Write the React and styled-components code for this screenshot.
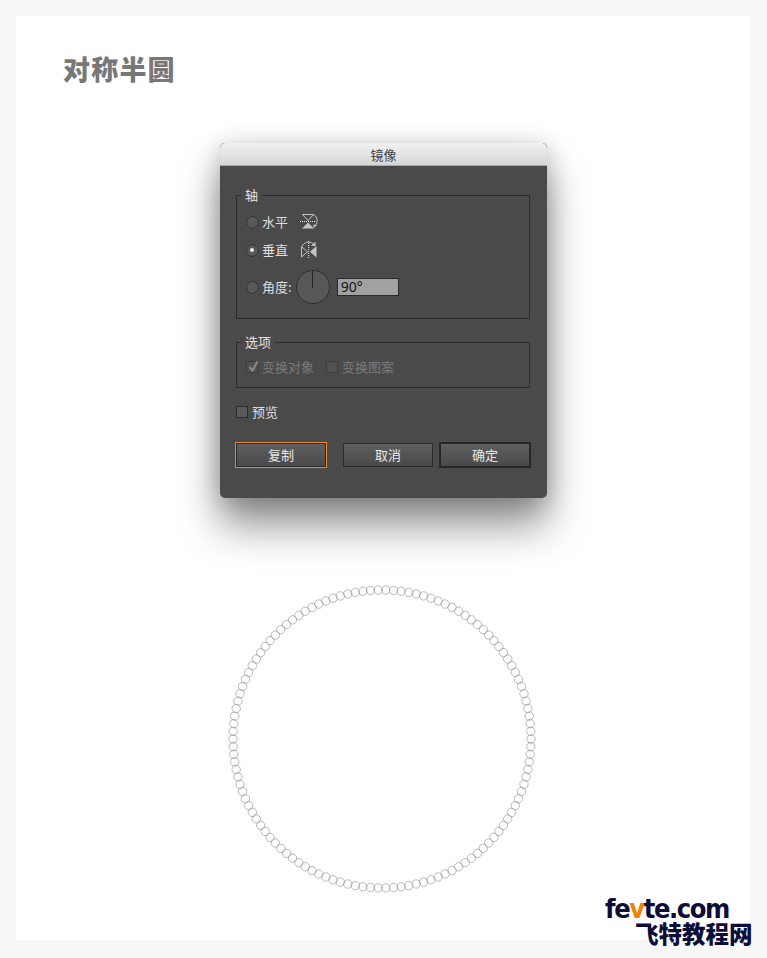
import React from 'react';
import styled, { createGlobalStyle } from 'styled-components';

const Global = createGlobalStyle`
  html, body { margin: 0; padding: 0; background: #f7f7f7; }
  body { font-family: "Noto Sans CJK SC", "Liberation Sans", sans-serif; overflow: hidden; }
`;
const Page = styled.div`
  width: 767px; height: 958px; padding: 16px 17px 18px 16px; box-sizing: border-box; position: relative; overflow: hidden;
`;
const Card = styled.main`
  width: 734px; height: 924px; background: #fff; display: flex; flex-direction: column; align-items: flex-start;
`;
const Title = styled.h1`
  margin: 37px 0 0 47px; font-size: 27px; line-height: 32px; font-weight: 900; letter-spacing: 1.2px; color: #777;
`;
const Dialog = styled.section`
  width: 327px; margin: 58px 0 0 204px; border-radius: 5px; background: #4a4a4a;
  box-shadow: 0 28px 42px rgba(0,0,0,.42), 0 4px 24px rgba(0,0,0,.22); overflow: hidden;
`;
const TitleBar = styled.header`
  height: 22px; background: linear-gradient(#f1f1f1, #d6d6d6); border-bottom: 1px solid #a9a9a9;
  text-align: center; font-size: 13px; line-height: 23px; color: #444; border-radius: 5px 5px 0 0;
`;
const Body = styled.div`
  padding: 20px 17px 30px 16px;
`;
const Group = styled.fieldset`
  margin: ${p => p.$top || 0}px 0 0; padding: ${p => p.$pad}; min-width: 0; border: 1px solid #2c2c2c;
  display: flex; flex-direction: column;
`;
const Legend = styled.legend`
  margin-left: 4px; padding: 0 4px; font-size: 13px; line-height: 18px; color: #e2e2e2;
`;
const Row = styled.div`
  display: flex; align-items: center; height: ${p => p.$h || 20}px; margin-top: ${p => p.$top || 0}px; font-size: 13px; color: #dedede;
`;
const Radio = styled.span`
  width: 13px; height: 13px; box-sizing: border-box; border-radius: 50%; border: 1.5px solid #2b2b2b; margin: 0 3.5px 0 -.5px;
  background: #585858; box-shadow: 0 0 0 .5px #5c5c5c; display: flex; align-items: center; justify-content: center; flex: none;
  &::after { content: ""; width: 4px; height: 4px; border-radius: 50%; background: ${p => p.$on ? '#eee' : 'transparent'}; }
`;
const Label = styled.span`
  line-height: 18px; white-space: nowrap; color: ${p => p.$dim ? '#7a7a7a' : 'inherit'};
`;
const FlipIcon = styled.svg`
  width: 18px; height: 18px; margin-left: 12px; flex: none; color: #c4c4c4;
`;
const Dial = styled.div`
  width: 34px; height: 34px; box-sizing: border-box; border-radius: 50%; border: 1px solid #2e2e2e; background: #585858;
  margin-left: 4px; flex: none; display: flex; justify-content: center;
  &::after { content: ""; width: 1.5px; height: 17px; background: #262626; }
`;
const Field = styled.div`
  width: 62px; height: 18px; box-sizing: border-box; margin-left: 7px; padding-left: 3px; background: #a1a1a1; border: 1px solid #2a2a2a;
  font: 14px/16px "Noto Sans", "Liberation Sans", sans-serif; color: #111;
`;
const Box = styled.span`
  width: 12px; height: 12px; box-sizing: border-box; border: 1px solid ${p => p.$dim ? '#3c3c3c' : '#2b2b2b'}; background: ${p => p.$dim ? '#525252' : '#5a5a5a'};
  margin-right: 4px; flex: none; position: relative; display: block;
  & > svg { position: absolute; left: -1px; top: -3px; }
`;
const GroupRow = styled(Row)`
  padding-left: 9px;
`;
const Gap = styled.span`
  width: ${p => p.$w}px; flex: none;
`;
const Actions = styled.div`
  display: flex; align-items: center; margin: 20px -2px 0 -1px;
`;
const Button = styled.button`
  width: ${p => p.$primary || p.$focus ? 92 : 90}px; height: ${p => p.$primary || p.$focus ? 26 : 24}px; box-sizing: border-box; padding: 0;
  margin-left: ${p => p.$left || 0}px;
  border: ${p => p.$primary ? '2px solid #262626' : p.$focus ? '1px solid #ec8a2b' : '1px solid #2a2a2a'};
  box-shadow: ${p => p.$focus ? 'inset 0 0 0 1px #2a2a2a' : 'none'};
  background: linear-gradient(#606060, #494949); font: 13px/18px "Noto Sans CJK SC", sans-serif; color: #e8e8e8;
`;
const Ring = styled.svg`
  display: block; margin: 81px 0 0 206px; flex: none;
`;
const Logo = styled.div`
  position: absolute; left: 605px; top: 897px; color: #0d0d38; width: 150px;
`;
const LogoTop = styled.div`
  font: 700 27px/24px "DejaVu Sans", sans-serif; font-stretch: condensed; letter-spacing: -1.4px; white-space: nowrap;
  & > b { color: #f08300; font-weight: 700; }
`;
const LogoBottom = styled.div`
  margin: 0 0 0 30px; font: 900 23.5px/24px "Noto Sans CJK SC", sans-serif; white-space: nowrap;
`;

const COUNT = 122;
const beads = Array.from({ length: COUNT }, (_, i) => {
  const a = (i / COUNT) * Math.PI * 2;
  return [160 + 149 * Math.cos(a), 160 + 149 * Math.sin(a)];
});

export default function App() {
  return (
    <Page>
      <Global />
      <Card>
        <Title>对称半圆</Title>
        <Dialog>
          <TitleBar>镜像</TitleBar>
          <Body>
            <Group $pad="8px 0 14px">
              <Legend>轴</Legend>
              <GroupRow>
                <Radio /><Label>水平</Label>
                <FlipIcon viewBox="0 0 18 18" fill="none">
                  <path d="M2.500 1.500h11L8 7.500z" stroke="currentColor" />
                  <path d="M2 15.500h12L8 9.500z" fill="currentColor" />
                  <path d="M0 8.500h15" stroke="#eee" strokeDasharray="1 1" />
                  <path d="M14 2c3.500 1.500 4 7.500 1.500 10.500" stroke="currentColor" />
                  <path d="M17 12l-3.500 3.200v-3.700z" fill="currentColor" />
                </FlipIcon>
              </GroupRow>
              <GroupRow $top={8}>
                <Radio $on /><Label>垂直</Label>
                <FlipIcon viewBox="0 0 18 18" fill="none">
                  <path d="M1.500 5.500v10.500l6-5.200z" stroke="currentColor" />
                  <path d="M16.500 5v11.500l-6.500-5.700z" fill="currentColor" />
                  <path d="M8.700 0v17" stroke="#eee" strokeDasharray="1 1" />
                  <path d="M2 5.500C3.500 1.500 9-.5 13 2.500" stroke="currentColor" />
                  <path d="M15.500 .5v4.500h-4.500z" fill="currentColor" />
                </FlipIcon>
              </GroupRow>
              <GroupRow $h={34} $top={10}>
                <Radio /><Label>角度:</Label>
                <Dial />
                <Field>90°</Field>
              </GroupRow>
            </Group>
            <Group $top={14} $pad="6px 0 10px">
              <Legend>选项</Legend>
              <GroupRow>
                <Box $dim>
                  <svg width="15" height="15" viewBox="0 0 15 15" fill="none">
                    <path d="M3.500 8l3 3.500 5-9" stroke="#8a8a8a" strokeWidth="2" />
                  </svg>
                </Box>
                <Label $dim>变换对象</Label>
                <Gap $w={12} />
                <Box $dim />
                <Label $dim>变换图案</Label>
              </GroupRow>
            </Group>
            <Row $top={14}>
              <Box /><Label>预览</Label>
            </Row>
            <Actions>
              <Button $focus>复制</Button>
              <Button $left={16}>取消</Button>
              <Button $left={6} $primary>确定</Button>
            </Actions>
          </Body>
        </Dialog>
        <Ring width="320" height="320" viewBox="0 0 320 320" fill="none" stroke="#8c8c8c" strokeWidth=".6">
          {beads.map(([x, y], i) => <circle key={i} cx={x} cy={y} r="4.200" />)}
        </Ring>
      </Card>
      <Logo>
        <LogoTop>fe<b>v</b>te.com</LogoTop>
        <LogoBottom>飞特教程网</LogoBottom>
      </Logo>
    </Page>
  );
}
